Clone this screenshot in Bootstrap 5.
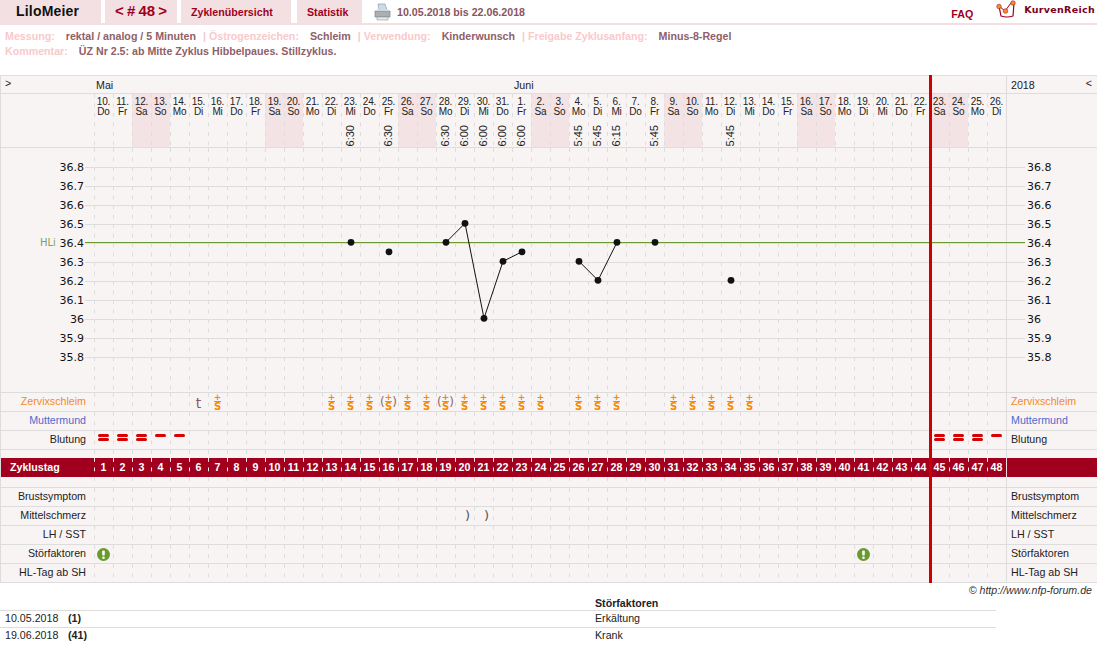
<!DOCTYPE html>
<html lang="de">
<head>
<meta charset="UTF-8">
<meta name="viewport" content="width=device-width, initial-scale=1.0">
<title>LiloMeier - Zyklus 48</title>
<link href="https://cdn.jsdelivr.net/npm/bootstrap@5.3.0/dist/css/bootstrap.min.css" rel="stylesheet">
<style>
body { margin: 0; background: #fff; font-family: "Liberation Sans", Arial, sans-serif; font-size: 8pt; color: #222; }
a { text-decoration: none; }

/* Kopfzeile */
.kopf { height: 25px; border-bottom: 2px solid #f3dfe1; }
.reiter { height: 23px; background: #f3e0e2; color: #a0001e; font-weight: 700; font-size: 8pt; }
.reiter-name { width: 101px; padding-left: 16px; margin-right: 4px; font-size: 14px; color: #111; letter-spacing: .2px; }
.reiter-nr { width: 72px; margin-right: 4px; justify-content: center; font-size: 15px; word-spacing: -1px; }
.reiter-zyklen { width: 110px; margin-right: 6px; padding-left: 10px; }
.reiter-stat { width: 65px; margin-right: 12px; padding-left: 10px; }
.zeitraum { margin-left: 6px; color: #8a5560; font-weight: 700; font-size: 8pt; }
.faq { color: #a0001e; font-weight: 700; font-size: 8pt; margin-right: 23px; padding-top: 4px; }
.logo-text { margin: 0 2px 0 6px; color: #7a0020; font-family: "DejaVu Sans", sans-serif; font-weight: 700; font-size: 9.5px; letter-spacing: .3px; padding-bottom: 2px; }

/* Angaben */
.angaben { height: 50px; padding: 4px 0 0 5px; line-height: 15px; font-weight: 700; white-space: nowrap; }
.hell { color: #f9c9cb; }
.wert { color: #8f6068; margin: 0 4px 0 11px; }

/* Tabelle */
.tafel { position: relative; width: 1097px; background: #f9f4f4; border-left: 1px solid #ddd; }
.zeile { display: grid; grid-template-columns: 93px repeat(48, 19px) 91px; height: 19px; border-bottom: 1px solid #ddd; line-height: 16px; }
.zeile-kopf { height: 19px; border-top: 1px solid #ddd; line-height: 18px; }
.zeile-daten { height: 54px; }
.zeile-leer { height: 8px; border-bottom: 0; }
.zeile-leer2 { height: 11px; }
.zeile-tag { background: #a0001e; color: #fff; border-bottom: 0; font-weight: 700; line-height: 18px; }
.titel { text-align: right; padding-right: 8px; white-space: nowrap; }
.titel-tag { text-align: left; padding-left: 9px; }
.rechts { border-left: 1px solid #ddd; padding-left: 4px; white-space: nowrap; }
.zeile-tag .rechts { border-left-color: #f3dfe1; }
.orange { color: #f58a1f; }
.blau { color: #4a6bd0; }
.tag { position: relative; text-align: center; background: linear-gradient(#ddd 0 4px, transparent 4px) left top / 1px 9.5px repeat-y; }
.zeile-tag .tag { background-image: linear-gradient(#f5e6e8 0 4px, transparent 4px); }
.wochenende { background-color: #f3e3e5; }
.datum { font-size: 10px; line-height: 10px; padding-top: 3px; letter-spacing: -.2px; }
.uhr { position: absolute; left: 4px; bottom: 1px; writing-mode: vertical-rl; transform: rotate(180deg); font-size: 11px; line-height: 11px; letter-spacing: 0; }
.monat { grid-column: 2 / span 22; padding-left: 2px; }
.monat2 { grid-column: span 26; padding-left: 2px; }
.pfeil { padding-left: 4px; line-height: 15px; }
.jahr { display: flex; justify-content: space-between; padding-right: 5px; }

/* Symbole in den Zeilen */
.schleim { display: flex; flex-direction: column; align-items: center; color: #f58a00; font-family: "DejaVu Sans", sans-serif; font-weight: 700; line-height: 1; padding-top: 1px; }
.schleim-plus { font-size: 9px; height: 6px; line-height: 6px; }
.schleim-s { font-size: 10px; height: 10px; line-height: 10px; border-top: 1px solid #f58a00; margin-top: 1px; }
.klammer { position: absolute; top: 1px; left: 0; right: 0; color: #8a6a70; font-family: "DejaVu Sans", sans-serif; font-size: 12px; line-height: 17px; display: flex; justify-content: space-between; padding: 0 1px; }
.buchstabe { color: #8a5a62; font-family: "DejaVu Sans", sans-serif; font-size: 14px; line-height: 20px; }
.blut { width: 11px; height: 3px; margin: 3px 0 0 4px; background: #d80000; border-radius: 2px; }
.blut + .blut { margin-top: 1px; }
.schmerz { display: block; padding: 1px 0 0 6px; color: #555; font-family: "DejaVu Sans", sans-serif; font-size: 13px; }
.warn { display: block; margin: 3px 0 0 3px; }

.rotlinie { position: absolute; left: 928px; top: 0; bottom: 0; width: 3px; background: #d00000; }

/* Fuss */
.quelle { height: 18px; line-height: 14px; padding-right: 5px; text-align: right; font-style: italic; color: #333; }
.stoer { width: 996px; }
.stoer-kopf { height: 9px; line-height: 5px; padding-left: 595px; font-weight: 700; }
.stoer-zeile { height: 17px; line-height: 14px; border-top: 1px solid #ddd; padding-left: 5px; }
.stoer-zeile span:first-child { width: 63px; }
.stoer-zeile b { width: 527px; }
</style>
</head>
<body>

<div class="kopf d-flex">
    <div class="reiter reiter-name d-flex align-items-center">LiloMeier</div>
    <a href="#" class="reiter reiter-nr d-flex align-items-center">&lt; # 48 &gt;</a>
    <a href="#" class="reiter reiter-zyklen d-flex align-items-center">Zyklenübersicht</a>
    <a href="#" class="reiter reiter-stat d-flex align-items-center">Statistik</a>
    <svg width="17" height="18" viewBox="0 0 17 18" class="align-self-center">
        <path d="M4 1h7l2 6H5z" fill="#c8dcea" stroke="#8aa0b0" stroke-width=".7"/>
        <path d="M1 8h15v6H1z" fill="#a9afb4" stroke="#7d8489" stroke-width=".7"/>
        <path d="M1 8l3-2h9l3 2z" fill="#d5d9dc"/>
        <path d="M3 14h11v3H3z" fill="#e6e8ea" stroke="#8d9398" stroke-width=".6"/>
    </svg>
    <div class="zeitraum align-self-center">10.05.2018 bis 22.06.2018</div>
    <a href="#" class="faq ms-auto align-self-center">FAQ</a>
    <svg width="22" height="20" viewBox="0 0 22 20">
        <path d="M3 6l2 10q6 2 12 0l1-13" fill="#fff" stroke="#a0001e" stroke-width="1.2"/>
        <path d="M3 6l6 5 6-8" fill="none" stroke="#a0001e" stroke-width="1"/>
        <circle cx="3" cy="6.500" r="2.300" fill="#f09020" stroke="#a0001e" stroke-width=".5"/>
        <circle cx="9.500" cy="11" r="2.300" fill="#f09020" stroke="#a0001e" stroke-width=".5"/>
        <circle cx="17" cy="3" r="2.300" fill="#f09020" stroke="#a0001e" stroke-width=".5"/>
    </svg>
    <div class="logo-text align-self-center">KurvenReich</div>
</div>

<div class="angaben">
    <div><span class="hell">Messung:</span><span class="wert">rektal / analog / 5 Minuten</span> <span class="hell">| Östrogenzeichen:</span><span class="wert">Schleim</span> <span class="hell">| Verwendung:</span><span class="wert">Kinderwunsch</span> <span class="hell">| Freigabe Zyklusanfang:</span><span class="wert">Minus-8-Regel</span></div>
    <div><span class="hell">Kommentar:</span><span class="wert">ÜZ Nr 2.5: ab Mitte Zyklus Hibbelpaues. Stillzyklus.</span></div>
</div>

<div class="tafel" id="tafel"></div>

<div class="quelle">© http://www.nfp-forum.de</div>
<div class="stoer">
    <div class="stoer-kopf">Störfaktoren</div>
    <div class="stoer-zeile d-flex"><span>10.05.2018</span><b>(1)</b><span>Erkältung</span></div>
    <div class="stoer-zeile d-flex"><span>19.06.2018</span><b>(41)</b><span>Krank</span></div>
</div>

<script src="https://cdn.jsdelivr.net/npm/bootstrap@5.3.0/dist/js/bootstrap.bundle.min.js"></script>
<script>
    const wochentage = ["Do", "Fr", "Sa", "So", "Mo", "Di", "Mi"];
    const uhrzeiten = { 13: "6:30", 15: "6:30", 18: "6:30", 19: "6:00", 20: "6:00", 21: "6:00", 22: "6:00", 25: "5:45", 26: "5:45", 27: "6:15", 29: "5:45", 33: "5:45" };
    const temperaturen = { 13: 36.4, 15: 36.35, 18: 36.4, 19: 36.5, 20: 36, 21: 36.3, 22: 36.35, 25: 36.3, 26: 36.2, 27: 36.4, 29: 36.4, 33: 36.2 };
    const linien = [[18, 19, 20, 21, 22], [25, 26, 27]];

    const plus = '<div class="schleim"><span class="schleim-plus">+</span><span class="schleim-s">S</span></div>';
    const plusKlammer = plus + '<div class="klammer"><span>(</span><span>)</span></div>';
    const einfach = '<div class="blut"></div>';
    const doppelt = einfach + einfach;
    const warnung = '<svg class="warn" width="13" height="13" viewBox="0 0 13 13"><circle cx="6.500" cy="6.500" r="6.500" fill="#6a9a30"/><rect x="5.200" y="2.500" width="2.600" height="5" rx="1" fill="#fff"/><circle cx="6.500" cy="9.800" r="1.300" fill="#fff"/></svg>';

    function mitInhalt(liste, inhalt) {
        const daten = {};
        liste.forEach(i => daten[i] = inhalt);
        return daten;
    }

    function zelle(i, inhalt, klasse) {
        return `<div class="tag ${klasse || ""}">${inhalt || ""}</div>`;
    }

    function zeile(klasse, links, daten, rechts, linksKlasse, rechtsKlasse) {
        let html = `<div class="zeile ${klasse}"><div class="titel ${linksKlasse || ""}">${links}</div>`;
        for (let i = 0; i < 48; i++) html += zelle(i, daten[i]);
        return html + `<div class="rechts ${rechtsKlasse || linksKlasse || ""}">${rechts}</div></div>`;
    }

    function kopfzeilen() {
        let html = `<div class="zeile zeile-kopf"><div class="pfeil">&gt;</div><div class="monat">Mai</div><div class="monat2">Juni</div><div class="rechts jahr"><span>2018</span><span class="pfeil">&lt;</span></div></div>`;
        html += '<div class="zeile zeile-daten"><div></div>';
        for (let i = 0; i < 48; i++) {
            const tag = i < 22 ? i + 10 : i - 21;
            const wt = wochentage[i % 7];
            const frei = wt === "Sa" || wt === "So";
            const uhr = uhrzeiten[i] ? `<span class="uhr">${uhrzeiten[i]}</span>` : "";
            html += zelle(i, `${tag}.<br>${wt}${uhr}`, "datum" + (frei ? " wochenende" : ""));
        }
        return html + '<div class="rechts"></div></div>';
    }

    function kurve() {
        const px = i => 94.5 + 19 * i + 9.5;
        const py = t => 242.3 + (36.4 - t) * 190;
        let s = '<svg width="1096" height="245" viewBox="1 148 1096 245" class="d-block" font-family="DejaVu Sans, sans-serif" font-size="11" fill="#111">';
        for (let k = 0; k <= 10; k++) {
            const y = 167.5 + 19 * k;
            s += `<line x1="85" x2="1025" y1="${y}" y2="${y}" stroke="#ddd"/>`;
            const wert = String(Math.round((36.8 - k / 10) * 10) / 10);
            s += `<text x="84" y="${y + 3.5}" text-anchor="end">${wert}</text>`;
            s += `<text x="1027" y="${y + 3.5}">${wert}</text>`;
        }
        for (let i = 0; i < 48; i++) {
            s += `<line x1="${94.5 + 19 * i}" x2="${94.5 + 19 * i}" y1="148" y2="392" stroke="#ddd" stroke-dasharray="4 5.5"/>`;
        }
        s += '<line x1="1006.500" x2="1006.500" y1="148" y2="392" stroke="#ddd"/>';
        s += '<text x="40" y="246" font-size="10" fill="#7fa35a">HLi</text>';
        s += '<line x1="85" x2="1025" y1="242.500" y2="242.500" stroke="#6a9a30"/>';
        s += '<line x1="0" x2="1097" y1="392.500" y2="392.500" stroke="#ddd"/>';
        linien.forEach(l => {
            s += `<polyline fill="none" stroke="#111" points="${l.map(i => px(i) + "," + py(temperaturen[i])).join(" ")}"/>`;
        });
        Object.keys(temperaturen).forEach(i => {
            s += `<circle cx="${px(+i)}" cy="${py(temperaturen[i])}" r="3.400" fill="#111"/>`;
        });
        return s + "</svg>";
    }

    const schleim = mitInhalt([6, 12, 13, 14, 16, 17, 19, 20, 21, 22, 23, 25, 26, 27, 30, 31, 32, 33, 34], plus);
    schleim[5] = '<span class="buchstabe">t</span>';
    schleim[15] = plusKlammer;
    schleim[18] = plusKlammer;

    const blutung = { 0: doppelt, 1: doppelt, 2: doppelt, 3: einfach, 4: einfach, 44: doppelt, 45: doppelt, 46: doppelt, 47: einfach };
    const zyklustage = {};
    for (let i = 0; i < 48; i++) zyklustage[i] = i + 1;
    const schmerz = { 19: '<span class="schmerz">)</span>', 20: '<span class="schmerz">)</span>' };
    const stoerung = { 0: warnung, 40: warnung };

    document.getElementById("tafel").innerHTML =
        kopfzeilen() +
        kurve() +
        zeile("", "Zervixschleim", schleim, "Zervixschleim", "orange") +
        zeile("", "Muttermund", {}, "Muttermund", "blau") +
        zeile("", "Blutung", blutung, "Blutung") +
        zeile("zeile-leer", "", {}, "") +
        zeile("zeile-tag", "Zyklustag", zyklustage, "", "titel-tag") +
        zeile("zeile-leer2", "", {}, "") +
        zeile("", "Brustsymptom", {}, "Brustsymptom") +
        zeile("", "Mittelschmerz", schmerz, "Mittelschmerz") +
        zeile("", "LH / SST", {}, "LH / SST") +
        zeile("", "Störfaktoren", stoerung, "Störfaktoren") +
        zeile("", "HL-Tag ab SH", {}, "HL-Tag ab SH") +
        '<div class="rotlinie"></div>';
</script>
</body>
</html>
